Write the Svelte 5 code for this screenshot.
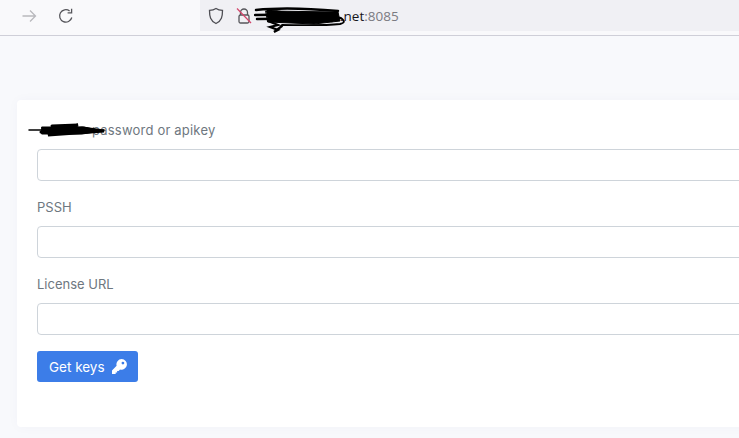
<script>
  let fields = [
    { id: "auth", label: "password or apikey", scribbled: true },
    { id: "pssh", label: "PSSH" },
    { id: "license", label: "License URL" }
  ];
</script>

<div class="browser">
  <header class="toolbar">
    <div class="nav">
      <svg class="ico" width="18" height="18" viewBox="0 0 18 18" fill="none" stroke="#b9b9bd" stroke-width="1.3">
        <path d="M2.5 9h13M10 3.500 15.500 9 10 14.500" />
      </svg>
      <svg class="ico" width="18" height="18" viewBox="0 0 18 18" fill="none" stroke="#55555a" stroke-width="1.3">
        <path d="M14.800 10.500A6.200 6.200 0 1 1 12.600 4" />
        <path d="M14.600 1.800v4h-4" />
      </svg>
    </div>
    <div class="urlbar">
      <svg width="16" height="18" viewBox="0 0 16 18" fill="none" stroke="#4e4e54" stroke-width="1.3">
        <path d="M8 1.500c2 1.300 4.300 1.800 6.500 1.900 0 6-.8 10.500-6.500 13.100C2.300 13.900 1.500 9.400 1.500 3.400 3.700 3.300 6 2.800 8 1.500Z" />
      </svg>
      <span class="lock">
        <svg width="16" height="18" viewBox="0 0 16 18" fill="none">
          <path d="M4.500 8V5.500a3.500 3.500 0 0 1 7 0V8" stroke="#55555a" stroke-width="1.300" />
          <rect x="3" y="8" width="10" height="8" rx="1.500" stroke="#55555a" stroke-width="1.300" />
          <path d="M1 1.500 15 16" stroke="#d3446a" stroke-width="1.200" />
        </svg>
      </span>
      <span class="host"><span class="host-hidden"></span>.net<span class="port">:8085</span>
        <svg class="scribble" width="94" height="28" viewBox="0 0 94 28" fill="none" stroke="#000" stroke-linecap="round">
          <path d="M2 4C20 2 50 2 84 5M1 9 80 8M3 13 86 12M14 4 78 15" stroke-width="2.500" />
          <path d="M12 5 84 6 86 15 60 18 14 16Z" fill="#000" stroke-width="1" />
          <path d="M14 15 24 19 16 21 24 24 20 26 28 20" stroke-width="2.200" />
          <path d="M28 19c14 0 40 1 58-1 5-1 5-3 1-6" stroke-width="1.800" />
        </svg>
      </span>
    </div>
  </header>

  <main class="page">
    <section class="card">
      {#each fields as field}
        <div class="field">
          <label for={field.id} class:scribbled={field.scribbled}>
            {#if field.scribbled}
              <svg class="label-scribble" width="78" height="16" viewBox="0 0 78 16" fill="none" stroke="#000" stroke-linecap="round">
                <path d="M1 8H76" stroke-width="1.500" />
                <path d="M13 10 54 6 76 9 20 13 50 3 24 4" stroke-width="3" />
                <path d="M14 5h42l18 4-20 3H14Z" fill="#000" stroke-width="1" />
              </svg>
            {/if}
            {field.label}
          </label>
          <input id={field.id} type="text" />
        </div>
      {/each}
      <button type="button" class="submit">
        Get keys
        <svg width="15" height="15" viewBox="0 0 14 14" fill="#fff">
          <path d="M9 0a5 5 0 1 1-1.500 9.800L6.200 11.100H4.800v1.400H3.400V14H0v-3.300l4.300-4.400A5 5 0 0 1 9 0Zm1.200 2.500a1.300 1.300 0 1 0 0 2.600 1.300 1.300 0 0 0 0-2.600Z" fill-rule="evenodd" />
        </svg>
      </button>
    </section>
  </main>
</div>

<style>
  :global(body) {
    margin: 0;
    overflow: hidden;
    background: #f8f9fc;
  }

  .browser {
    width: 739px;
    height: 438px;
    overflow: hidden;
    font-family: Inter, "Noto Sans", sans-serif;
  }

  .toolbar {
    display: flex;
    height: 35px;
    background: #f9f9fb;
    border-bottom: 1px solid #cfcfd8;
  }

  .nav {
    display: flex;
    align-items: center;
    gap: 19px;
    width: 200px;
    padding: 0 0 3px 20px;
    box-sizing: border-box;
  }

  .urlbar {
    display: flex;
    align-items: center;
    flex: 1;
    height: 31px;
    padding-left: 8px;
    background: #f0f0f4;
    font-family: "Open Sans", sans-serif;
    font-size: 13.5px;
    color: #15141a;
  }

  .lock {
    display: flex;
    margin-left: 12px;
  }

  .host {
    position: relative;
    display: flex;
    align-items: center;
    margin-left: 5px;
  }

  .host-hidden {
    width: 83px;
  }

  .port {
    color: #7b7b82;
  }

  .scribble {
    position: absolute;
    left: -3px;
    top: -1px;
  }

  .page {
    padding: 64px 0 0 17px;
  }

  .card {
    width: 760px;
    height: 327px;
    padding: 20px 20px 0;
    box-sizing: border-box;
    background: #fff;
    border-radius: 4px;
    box-shadow: 0 0 12px rgba(60, 70, 120, 0.03);
  }

  .field {
    margin-bottom: 16px;
  }

  label {
    display: block;
    position: relative;
    height: 20px;
    margin-bottom: 9px;
    font-size: 13px;
    line-height: 20px;
    color: #6e7780;
  }

  label.scribbled {
    padding-left: 55px;
    letter-spacing: 0.2px;
  }

  .label-scribble {
    position: absolute;
    left: -9px;
    top: 2px;
  }

  input {
    display: block;
    width: 100%;
    height: 32px;
    box-sizing: border-box;
    border: 1px solid #ced4da;
    border-radius: 4px;
    background: #fff;
  }

  .submit {
    display: flex;
    align-items: center;
    gap: 7px;
    height: 31px;
    padding: 0 11px 0 12px;
    border: 0;
    border-radius: 3px;
    background: #3c7de8;
    color: #fff;
    font-family: inherit;
    font-size: 13.5px;
  }
</style>
